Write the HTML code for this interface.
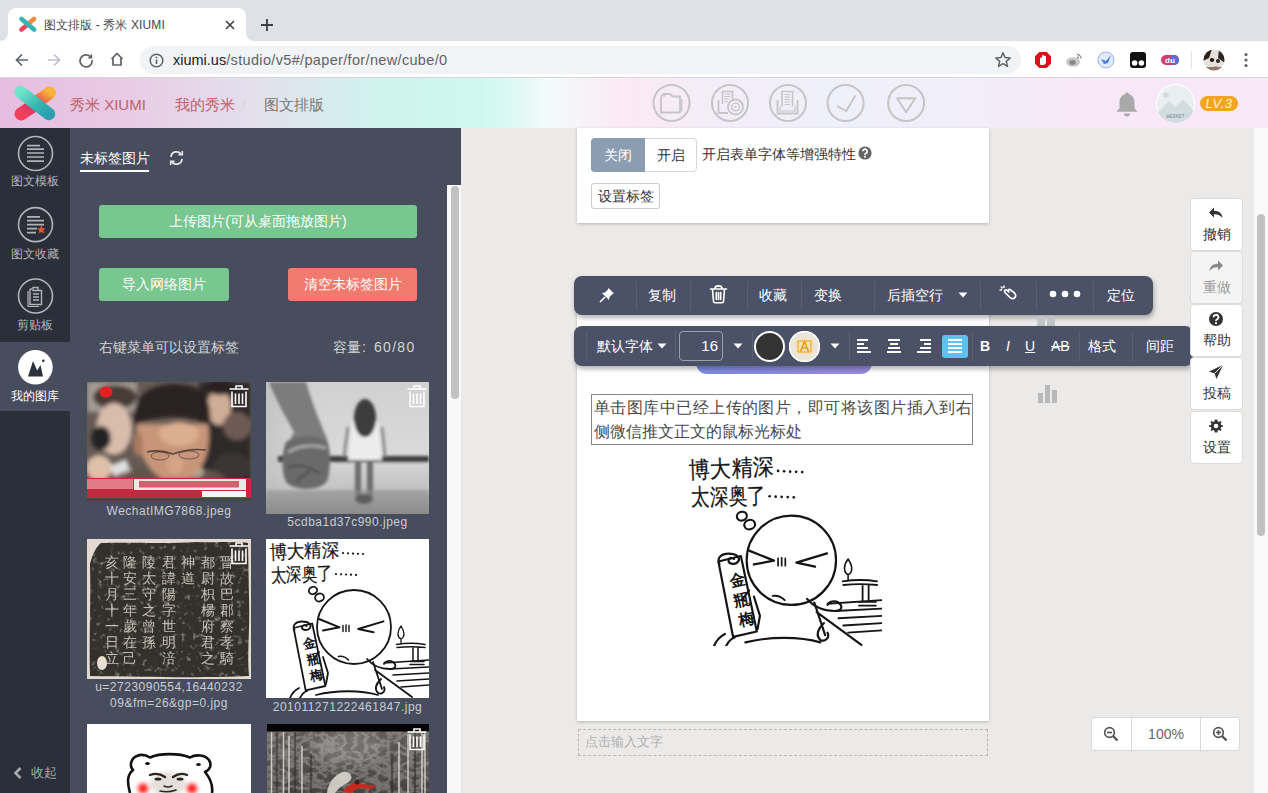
<!DOCTYPE html>
<html><head><meta charset="utf-8">
<style>
*{box-sizing:border-box;margin:0;padding:0}
html,body{width:1268px;height:793px;overflow:hidden;font-family:"Liberation Sans",sans-serif;background:#ebebeb;position:relative}
.a{position:absolute}
/* chrome */
#tabbar{left:0;top:0;width:1268px;height:41px;background:#dee1e6}
#tab{left:8px;top:8px;width:238px;height:34px;background:#fff;border-radius:8px 8px 0 0}
#toolbar{left:0;top:41px;width:1268px;height:37px;background:#fff;border-bottom:1px solid #d6d6d6}
#omni{left:140px;top:46px;width:881px;height:28px;background:#f1f3f4;border-radius:14px}
/* header */
#hdr{left:0;top:78px;width:1268px;height:50px;background:linear-gradient(90deg,#e6bde0 0%,#e9cbe5 10%,#e3e0ec 20%,#cff3ef 30%,#cff7f0 38%,#f2fbfb 43.5%,#fce9f5 49%,#f3edf8 56%,#eff0fa 66%,#f1eef9 76%,#f9e8f7 86%,#f8e9f8 100%)}
#side{left:0;top:128px;width:70px;height:665px;background:#2b2f39}
#panel{left:70px;top:128px;width:391px;height:665px;background:#474d5c}
#canvas{left:461px;top:128px;width:807px;height:665px;background:#ebeae9}
</style></head><body>
<div id="tabbar" class="a"></div>
<div id="tab" class="a"></div><div class="a" style="left:0;top:33px;width:8px;height:8px;background:#fff"></div><div class="a" style="left:0;top:33px;width:8px;height:8px;background:#dee1e6;border-radius:0 0 8px 0"></div><div class="a" style="left:246px;top:33px;width:8px;height:8px;background:#fff"></div><div class="a" style="left:246px;top:33px;width:8px;height:8px;background:#dee1e6;border-radius:0 0 0 8px"></div>
<div id="toolbar" class="a"></div>
<div id="omni" class="a"></div>

<!-- tab content -->
<svg class="a" style="left:18px;top:16px" width="20" height="17" viewBox="0 0 20 17">
 <path d="M16 3 L10 8" stroke="#f08a3c" stroke-width="4.6" stroke-linecap="round"/>
 <path d="M9 9 L3.5 13.5" stroke="#e8455f" stroke-width="4.6" stroke-linecap="round"/>
 <path d="M3.5 3 L16 13.5" stroke="#35b3b5" stroke-width="4.6" stroke-linecap="round"/>
</svg>
<div class="a" style="left:44px;top:17px;font-size:12px;color:#45474a;white-space:nowrap;line-height:17px;letter-spacing:0.1px">图文排版 - 秀米 XIUMI</div>
<svg class="a" style="left:224px;top:19px" width="12" height="12" viewBox="0 0 12 12"><path d="M2 2L10 10M10 2L2 10" stroke="#3c4043" stroke-width="1.6"/></svg>
<svg class="a" style="left:260px;top:18px" width="14" height="14" viewBox="0 0 14 14"><path d="M7 1V13M1 7H13" stroke="#3c4043" stroke-width="1.8"/></svg>
<!-- nav icons -->
<svg class="a" style="left:14px;top:52px" width="16" height="16" viewBox="0 0 16 16"><path d="M14 8H2.5M8 2.5L2.5 8L8 13.5" stroke="#5f6368" stroke-width="1.7" fill="none"/></svg>
<svg class="a" style="left:46px;top:52px" width="16" height="16" viewBox="0 0 16 16"><path d="M2 8H13.5M8 2.5L13.5 8L8 13.5" stroke="#bdc1c6" stroke-width="1.7" fill="none"/></svg>
<svg class="a" style="left:78px;top:52px" width="16" height="16" viewBox="0 0 16 16"><path d="M13 5.5A6 6 0 1 0 14 8" stroke="#5f6368" stroke-width="1.7" fill="none"/><path d="M14.2 1.8V6.5H9.5Z" fill="#5f6368"/></svg>
<svg class="a" style="left:109px;top:51px" width="16" height="16" viewBox="0 0 16 16"><path d="M2.5 8L8 2.5L13.5 8M4 7V14H12V7" stroke="#5f6368" stroke-width="1.7" fill="none" stroke-linejoin="miter"/></svg>
<svg class="a" style="left:149px;top:53px" width="15" height="15" viewBox="0 0 15 15"><circle cx="7.5" cy="7.5" r="6.3" stroke="#5f6368" stroke-width="1.5" fill="none"/><path d="M7.5 6.5V11" stroke="#5f6368" stroke-width="1.6"/><circle cx="7.5" cy="4.4" r="0.9" fill="#5f6368"/></svg>
<div class="a" style="left:173px;top:51px;font-size:14.5px;line-height:18px;color:#5f6368;white-space:nowrap"><span style="color:#202124">xiumi.us</span><span style="letter-spacing:0.34px">/studio/v5#/paper/for/new/cube/0</span></div>
<svg class="a" style="left:994px;top:51px" width="18" height="18" viewBox="0 0 18 18"><path d="M9 1.8L11.1 6.6L16.2 7L12.3 10.4L13.5 15.4L9 12.7L4.5 15.4L5.7 10.4L1.8 7L6.9 6.6Z" stroke="#5f6368" stroke-width="1.5" fill="none" stroke-linejoin="round"/></svg>
<!-- extensions -->
<svg class="a" style="left:1034px;top:51px" width="18" height="18" viewBox="0 0 18 18"><path d="M5.3 1H12.7L17 5.3V12.7L12.7 17H5.3L1 12.7V5.3Z" fill="#d8121c"/><path d="M6 13.5V7.5a1 1 0 0 1 2 0V5a1 1 0 0 1 2 0V5.8a1 1 0 0 1 2 0V11c0 2-1.5 3-3 3H8c-1 0-1.5-.5-2-.5Z" fill="#fff"/></svg>
<svg class="a" style="left:1065px;top:52px" width="18" height="16" viewBox="0 0 18 16"><ellipse cx="8" cy="10" rx="7" ry="4.8" fill="#c9c9c9"/><ellipse cx="7.5" cy="10.5" rx="3.2" ry="2.4" fill="#888"/><path d="M12 2.5a4 4 0 0 1 4 4M12 5a1.6 1.6 0 0 1 1.6 1.6" stroke="#8a8a8a" stroke-width="1.3" fill="none"/></svg>
<svg class="a" style="left:1097px;top:51px" width="18" height="18" viewBox="0 0 18 18"><circle cx="9" cy="9" r="8" fill="#e3ebfb" stroke="#9ab3ee" stroke-width="1"/><path d="M4 8L9 10L14 4L11 12L7 13Z" fill="#4a7de0"/></svg>
<svg class="a" style="left:1129px;top:51px" width="18" height="18" viewBox="0 0 18 18"><rect x="1" y="1" width="16" height="16" rx="3" fill="#111"/><circle cx="5.6" cy="12" r="2.8" fill="#fff"/><circle cx="12.4" cy="12" r="2.8" fill="#fff"/></svg>
<svg class="a" style="left:1160px;top:53px" width="20" height="14" viewBox="0 0 20 14"><rect x="1" y="2" width="18" height="10" rx="5" fill="#d83a6e"/><rect x="10" y="2" width="9" height="10" rx="5" fill="#5b6fd8"/><text x="10" y="10.3" font-size="8" fill="#fff" text-anchor="middle" font-family="Liberation Sans" font-weight="bold">du</text></svg>
<div class="a" style="left:1191px;top:51px;width:1px;height:18px;background:#e3e5e8"></div>
<svg class="a" style="left:1203px;top:49px" width="22" height="22" viewBox="0 0 22 22"><defs><clipPath id="avc"><circle cx="11" cy="11" r="10.5"/></clipPath></defs><g clip-path="url(#avc)"><rect width="22" height="22" fill="#e6e1da"/><path d="M0 0H9L6 9L0 12Z" fill="#2a2320"/><path d="M16 0H22V14L15 9Z" fill="#2f2823"/><ellipse cx="9" cy="11" rx="2.2" ry="2" fill="#1e1a18"/><ellipse cx="15" cy="12" rx="2" ry="2" fill="#2a2220"/><path d="M9 16Q12 19 15 16L13 19Z" fill="#c66"/><path d="M0 18H22V22H0Z" fill="#8a7a6a"/></g></svg>
<svg class="a" style="left:1243px;top:52px" width="6" height="16" viewBox="0 0 6 16"><circle cx="3" cy="2.5" r="1.6" fill="#5f6368"/><circle cx="3" cy="8" r="1.6" fill="#5f6368"/><circle cx="3" cy="13.5" r="1.6" fill="#5f6368"/></svg>
<div id="hdr" class="a"></div>

<!-- app header content -->
<svg class="a" style="left:12px;top:83px" width="46" height="41" viewBox="12 83 46 41">
 <defs>
  <linearGradient id="lg1" x1="0" y1="0" x2="1" y2="1"><stop offset="0" stop-color="#72e6cc"/><stop offset="0.6" stop-color="#33b5ad"/><stop offset="1" stop-color="#2b9fb0"/></linearGradient>
  <linearGradient id="lg2" x1="1" y1="0" x2="0" y2="1"><stop offset="0" stop-color="#f7b23a"/><stop offset="1" stop-color="#e9484f"/></linearGradient>
  <linearGradient id="lg3" x1="1" y1="0" x2="0" y2="1"><stop offset="0" stop-color="#d8386a"/><stop offset="1" stop-color="#f2405a"/></linearGradient>
 </defs>
 <path d="M49.5 93 L37 102" stroke="url(#lg2)" stroke-width="13" stroke-linecap="round" fill="none"/>
 <path d="M33 106 L21 114" stroke="url(#lg3)" stroke-width="13" stroke-linecap="round" fill="none"/>
 <path d="M20.5 92 L49 114" stroke="url(#lg1)" stroke-width="12.5" stroke-linecap="round" fill="none"/>
</svg>
<div class="a" style="left:70px;top:95px;font-size:15px;line-height:20px;color:#c0626a;white-space:nowrap">秀米 XIUMI</div>
<div class="a" style="left:153px;top:95px;font-size:15px;line-height:20px;color:#d8d8d8">/</div>
<div class="a" style="left:175px;top:95px;font-size:15px;line-height:20px;color:#c0626a;white-space:nowrap">我的秀米</div>
<div class="a" style="left:242px;top:95px;font-size:15px;line-height:20px;color:#d8d8d8">/</div>
<div class="a" style="left:264px;top:95px;font-size:15px;line-height:20px;color:#777;white-space:nowrap">图文排版</div>
<svg class="a" style="left:640px;top:80px" width="300" height="46" viewBox="640 80 300 46" fill="none" stroke="#c5c5c7" stroke-width="2">
 <circle cx="671.5" cy="103" r="18"/>
 <path d="M661 96.5V112.5H680V96.5H672.5L670.5 94H663.5L661.5 96.5" stroke-width="1.8" stroke-linejoin="round"/>
 <path d="M664.5 93.8V96.5M681.8 99V111.5" stroke-width="1.4"/>
 <circle cx="730" cy="103" r="18"/>
 <path d="M722.5 104V91.5H732.5V98.5" stroke-width="1.6"/>
 <path d="M724.5 94H730.5M724.5 96.5H730.5M724.5 99H729M724.5 101.5H728" stroke-width="1.2"/>
 <path d="M718.5 100V113H728" stroke-width="1.8"/>
 <circle cx="735.5" cy="107" r="7.5" stroke-width="1.8"/><circle cx="735.5" cy="107" r="3.8" stroke-width="1.3"/><circle cx="735.5" cy="107" r="1" fill="#c5c5c7" stroke="none"/>
 <circle cx="788" cy="103" r="18"/>
 <path d="M782 106.5V91.5H792.5V106.5" stroke-width="1.6"/>
 <path d="M784.5 94.5H790M784.5 97H790M784.5 99.5H790M784.5 102H790M784.5 104.5H790" stroke-width="1.2"/>
 <path d="M777.5 100V113.5H797.5V100" stroke-width="1.8"/>
 <path d="M780 106.5V111H795V106.5" stroke-width="1.2"/>
 <circle cx="845.6" cy="103" r="18"/>
 <path d="M837 106L846.3 111L855.4 95.6" stroke-width="1.9"/>
 <circle cx="906.1" cy="103" r="18"/>
 <path d="M897.2 98.3H915.4L906.1 112.3Z" stroke-width="1.9" stroke-linejoin="round"/>
</svg>
<svg class="a" style="left:1114px;top:90px" width="26" height="28" viewBox="0 0 26 28"><path d="M13 2.5c1.2 0 2 .8 2 1.8 3.6 1 5.5 4 5.5 8v6l3 3.5H2.5l3-3.5v-6c0-4 1.9-7 5.5-8 0-1 .8-1.8 2-1.8Z" fill="#a9a9a9"/><path d="M10 23.5a3 3 0 0 0 6 0Z" fill="#a9a9a9"/></svg>
<div class="a" style="left:1156px;top:84px;width:39px;height:39px;border-radius:50%;background:#fff;overflow:hidden">
 <svg width="39" height="39" viewBox="0 0 39 39"><circle cx="19.5" cy="19.5" r="18.5" fill="#e9eff1"/><circle cx="10" cy="11" r="2.8" fill="#d3dade"/><path d="M2 28L13 17L20 23L27 15L37 26V39H2Z" fill="#d3dce1"/><text x="19.5" y="33.5" font-size="5" fill="#7a8a95" text-anchor="middle" font-family="Liberation Mono">WESKET</text></svg>
</div>
<div class="a" style="left:1200px;top:96px;width:38px;height:15px;border-radius:8px;background:#f3a51f;color:#fff6cc;font-style:italic;font-size:13px;line-height:15px;text-align:center;letter-spacing:0.5px">LV.3</div>
<div id="canvas" class="a"></div>
<div id="side" class="a"></div>

<!-- sidebar content -->
<div class="a" style="left:0;top:342px;width:70px;height:69px;background:#474d5c"></div>
<svg class="a" style="left:0;top:128px" width="70" height="290" viewBox="0 128 70 290" fill="none" stroke="#b3b4b9">
 <circle cx="35.5" cy="153.5" r="17" stroke-width="1.6"/>
 <path d="M27 145.7H40M27 149.2H44M27 153H44M27 157H44M27 161.2H44" stroke-width="1.7"/>
 <circle cx="35.5" cy="224.6" r="17" stroke-width="1.6"/>
 <path d="M27 216.8H40M27 220.6H44M27 224.6H44M27 228.6H37M27 232.6H36" stroke-width="1.7"/>
 <path d="M41.3 225.5L42.6 228.3L45.6 228.6L43.3 230.6L44 233.5L41.3 232L38.6 233.5L39.3 230.6L37 228.6L40 228.3Z" fill="#e0573e" stroke="none"/>
 <circle cx="35.5" cy="296" r="17" stroke-width="1.6"/>
 <path d="M30 289V304.5H41.5V290.5H38.5M32 289H30 M33 287.5H38V290.5H33Z M33 294H39M33 297H39M33 300H39" stroke-width="1.4"/>
 <path d="M28 291V306.5H39" stroke-width="1.2"/>
 <circle cx="35.4" cy="367.2" r="17.3" fill="#fff" stroke="none"/>
 <path d="M28 376.5L33 361L37.2 370.5L40.5 365L43 376.5Z" fill="#2c303a" stroke="none"/>
 <circle cx="43.3" cy="360.8" r="1.3" fill="#2c303a" stroke="none"/>
</svg>
<div class="a" style="left:0;top:173px;width:70px;text-align:center;font-size:12px;line-height:17px;color:#b3b4b9">图文模板</div>
<div class="a" style="left:0;top:245.5px;width:70px;text-align:center;font-size:12px;line-height:17px;color:#b3b4b9">图文收藏</div>
<div class="a" style="left:0;top:317px;width:70px;text-align:center;font-size:12px;line-height:17px;color:#b3b4b9">剪贴板</div>
<div class="a" style="left:0;top:387.5px;width:70px;text-align:center;font-size:12px;line-height:17px;color:#fff">我的图库</div>
<svg class="a" style="left:12px;top:766px" width="12" height="14" viewBox="0 0 12 14"><path d="M8.5 2L3.5 7L8.5 12" stroke="#a7a9ae" stroke-width="2.6" fill="none"/></svg>
<div class="a" style="left:31px;top:764px;font-size:13px;line-height:18px;color:#a7a9ae">收起</div>
<div id="panel" class="a"></div>

<!-- panel content -->
<div class="a" style="left:80px;top:150px;font-size:13.5px;line-height:18px;color:#fff;white-space:nowrap">未标签图片</div>
<div class="a" style="left:80px;top:169.5px;width:69px;height:2px;background:#fff"></div>
<svg class="a" style="left:168px;top:150px" width="17" height="16" viewBox="0 0 17 16" fill="none" stroke="#e6e6e6" stroke-width="1.8"><path d="M3 7A5.5 5.5 0 0 1 13.2 4.5"/><path d="M14 9A5.5 5.5 0 0 1 3.8 11.5"/><path d="M10.5 4.8H14.3V1" stroke-width="1.6"/><path d="M6.5 11.2H2.7V15" stroke-width="1.6"/></svg>
<div class="a" style="left:99px;top:205px;width:318px;height:33px;background:#78c690;border-radius:3px;color:#fff;font-size:14px;line-height:33px;text-align:center">上传图片(可从桌面拖放图片)</div>
<div class="a" style="left:99px;top:268px;width:130px;height:33px;background:#78c690;border-radius:3px;color:#fff;font-size:14px;line-height:33px;text-align:center">导入网络图片</div>
<div class="a" style="left:288px;top:268px;width:129px;height:33px;background:#ef7a6d;border-radius:3px;color:#fff;font-size:14px;line-height:33px;text-align:center">清空未标签图片</div>
<div class="a" style="left:99px;top:338px;font-size:14px;line-height:18px;color:#d2d4d8;white-space:nowrap">右键菜单可以设置标签</div>
<div class="a" style="left:333px;top:338px;font-size:14px;line-height:18px;color:#d2d4d8;white-space:nowrap">容量</div><div class="a" style="left:362px;top:338px;font-size:14px;line-height:18px;color:#d2d4d8">:</div><div class="a" style="left:374px;top:338px;font-size:14px;line-height:18px;color:#d2d4d8;letter-spacing:1.3px;white-space:nowrap">60/80</div>
<!-- scrollbar -->
<div class="a" style="left:447px;top:185px;width:14px;height:608px;background:#f8f8f8"></div>
<div class="a" style="left:451px;top:186px;width:8px;height:213px;background:#c1c1c1;border-radius:4px"></div>

<!-- image 1: news -->
<svg class="a" style="left:87px;top:382px" width="164" height="119" viewBox="0 0 164 119">
 <defs><filter id="b1" x="-10%" y="-10%" width="120%" height="120%"><feGaussianBlur stdDeviation="2"/></filter></defs>
 <rect width="164" height="119" fill="#655a54"/>
 <g filter="url(#b1)">
  <rect x="0" y="0" width="50" height="30" fill="#a49c94"/>
  <rect x="112" y="0" width="52" height="119" fill="#2f2a29"/>
  <ellipse cx="28" cy="15" rx="22" ry="12" fill="#4a3a34"/>
  <ellipse cx="27" cy="47" rx="18" ry="26" fill="#d8bcac"/>
  <ellipse cx="14" cy="56" rx="10" ry="12" fill="#232020"/>
  <ellipse cx="12" cy="86" rx="13" ry="13" fill="#dcc0a8"/>
  <ellipse cx="132" cy="25" rx="12" ry="18" fill="#cfae98"/>
  <ellipse cx="134" cy="5" rx="16" ry="8" fill="#2a2423"/>
  <ellipse cx="150" cy="44" rx="14" ry="14" fill="#6e5a54"/>
  <ellipse cx="145" cy="85" rx="18" ry="14" fill="#3a3534"/>
  <path d="M36 98 C45 80 60 86 88 90 C110 92 125 80 140 98Z" fill="#5f574c"/>
  <ellipse cx="107" cy="90" rx="10" ry="6" fill="#b0a890"/>
  <path d="M50 42 C48 62 56 86 76 97 L102 97 C120 86 124 62 121 42 Z" fill="#c7957a"/>
  <ellipse cx="92" cy="52" rx="20" ry="12" fill="#dcae90"/>
  <ellipse cx="88" cy="82" rx="8" ry="10" fill="#d6a486"/>
  <ellipse cx="51" cy="62" rx="5" ry="12" fill="#a87a62"/>
  <path d="M47 44 C44 14 62 2 88 2 C116 2 126 16 123 44 C110 34 70 31 47 44Z" fill="#2a2220"/>
  <rect x="24" y="80" width="18" height="12" fill="#e0e0e0" transform="rotate(-22 33 86)"/>
 </g>
 <path d="M60 70 Q72 67 86 72 Q102 66 119 68" stroke="#2a2220" stroke-width="1.5" fill="none" opacity="0.7"/><ellipse cx="73" cy="74" rx="9" ry="4" fill="none" stroke="#3a302a" stroke-width="1" opacity="0.6"/><ellipse cx="102" cy="73" rx="10" ry="4" fill="none" stroke="#3a302a" stroke-width="1" opacity="0.6"/>
 <rect x="0" y="96" width="164" height="20" fill="#c32a40"/>
 <rect x="0" y="97" width="46" height="10" fill="#e27a88"/>
 <rect x="47" y="97" width="112" height="11" fill="#efe6e6"/>
 <rect x="52" y="99" width="100" height="6.5" fill="#c8404e" opacity="0.8"/>
 <rect x="115" y="109" width="44" height="6" fill="#f4f4f4"/>
 <rect x="0" y="116" width="164" height="3" fill="#4a4444"/>
 <ellipse cx="19" cy="10" rx="6.5" ry="5.5" fill="#e52020"/>
</svg>
<svg class="a" style="left:228px;top:384px" width="22" height="24" viewBox="0 0 22 24" fill="none" stroke="#fff" stroke-width="1.6"><path d="M1.5 5H20.5M8 5V2H14V5M4 7.5V22.5H18V7.5M7.5 9.5V20M11 9.5V20M14.5 9.5V20"/></svg>
<div class="a" style="left:87px;top:504px;width:164px;text-align:center;font-size:12px;line-height:15px;color:#c9ccd3;letter-spacing:0.5px;white-space:nowrap">WechatIMG7868.jpeg</div>
<!-- image 2: bw -->
<svg class="a" style="left:266px;top:382px" width="163" height="132" viewBox="0 0 163 132">
 <defs><filter id="b2" x="-10%" y="-10%" width="120%" height="120%"><feGaussianBlur stdDeviation="1.5"/></filter>
 <linearGradient id="g2" x1="0" y1="0" x2="0" y2="1"><stop offset="0" stop-color="#d0d0d0"/><stop offset="0.55" stop-color="#dadada"/><stop offset="0.8" stop-color="#c2c2c2"/><stop offset="1" stop-color="#888"/></linearGradient>
 <linearGradient id="g2b" x1="0" y1="0" x2="1" y2="0"><stop offset="0" stop-color="#bdbdbd"/><stop offset="0.5" stop-color="#dcdcdc" stop-opacity="0"/></linearGradient></defs>
 <rect width="163" height="132" fill="url(#g2)"/>
 <rect width="163" height="110" fill="url(#g2b)" opacity="0.7"/>
 <g filter="url(#b2)">
  <rect x="12" y="74" width="151" height="6" fill="#3c3c3c"/>
  <path d="M86 40 L112 40 L116 78 L82 78Z" fill="#ececec"/>
  <path d="M82 45 L78 75 M116 45 L119 75" stroke="#8a8a8a" stroke-width="3"/>
  <ellipse cx="99" cy="36" rx="11" ry="19" fill="#3e3e3e"/>
  <rect x="89" y="78" width="6" height="36" fill="#6a6a6a"/>
  <rect x="101" y="78" width="6" height="36" fill="#6a6a6a"/>
  <ellipse cx="98" cy="117" rx="9" ry="5" fill="#222"/>
  <rect x="0" y="108" width="163" height="24" fill="#8e8e8e" opacity="0.55"/>
  <path d="M3 0 L40 0 C45 18 52 35 58 50 C64 60 66 80 62 98 C56 108 34 110 22 102 C15 94 15 72 24 58 L28 50 C18 32 9 16 3 0Z" fill="#7c7c7c"/><path d="M20 60 C30 52 55 52 62 62 C66 80 62 98 58 102 C50 108 32 108 22 102 C15 94 15 72 20 60Z" fill="#6a6a6a"/>
  <path d="M22 70 Q40 60 60 66" stroke="#a8a8a8" stroke-width="3" fill="none"/>
  <path d="M22 85 Q38 80 54 92 M30 100 L44 88" stroke="#4a4a4a" stroke-width="2" fill="none"/>
 </g>
</svg>
<svg class="a" style="left:406px;top:384px" width="22" height="24" viewBox="0 0 22 24" fill="none" stroke="#fff" stroke-width="1.6"><path d="M1.5 5H20.5M8 5V2H14V5M4 7.5V22.5H18V7.5M7.5 9.5V20M11 9.5V20M14.5 9.5V20"/></svg>
<div class="a" style="left:266px;top:515px;width:163px;text-align:center;font-size:12px;line-height:15px;color:#c9ccd3;letter-spacing:0.5px;white-space:nowrap">5cdba1d37c990.jpeg</div>

<!-- image 3: stele -->
<svg class="a" style="left:87px;top:539px" width="164" height="140" viewBox="0 0 164 140">
 <defs><filter id="b3"><feGaussianBlur stdDeviation="0.55"/></filter>
 <filter id="n3" x="0" y="0" width="100%" height="100%"><feTurbulence type="fractalNoise" baseFrequency="0.18" numOctaves="3" seed="7"/><feColorMatrix values="0 0 0 0 0.8  0 0 0 0 0.78  0 0 0 0 0.74  0 0 0 -3 1.25"/></filter></defs>
 <rect width="164" height="140" fill="#e2dad0"/>
 <path d="M14 4 C40 3 80 5 110 3 C130 4 150 2 161 4 L162 60 C163 90 160 115 162 137 C120 139 60 138 3 137 C2 100 4 60 3 25 C6 14 9 8 14 4Z" fill="#34302c"/>
 <rect width="164" height="140" filter="url(#n3)" opacity="0.55"/>
 <g filter="url(#b3)" fill="#dcd6cc" font-family="Liberation Serif" font-size="14" opacity="0.85"><text x="140" y="28" text-anchor="middle">晋</text><text x="140" y="44" text-anchor="middle">故</text><text x="140" y="60" text-anchor="middle">巴</text><text x="140" y="76" text-anchor="middle">郡</text><text x="140" y="92" text-anchor="middle">察</text><text x="140" y="108" text-anchor="middle">孝</text><text x="140" y="124" text-anchor="middle">騎</text><text x="121" y="28" text-anchor="middle">都</text><text x="121" y="44" text-anchor="middle">尉</text><text x="121" y="60" text-anchor="middle">枳</text><text x="121" y="76" text-anchor="middle">楊</text><text x="121" y="92" text-anchor="middle">府</text><text x="121" y="108" text-anchor="middle">君</text><text x="121" y="124" text-anchor="middle">之</text><text x="101" y="28" text-anchor="middle">神</text><text x="101" y="44" text-anchor="middle">道</text><text x="82" y="28" text-anchor="middle">君</text><text x="82" y="44" text-anchor="middle">諱</text><text x="82" y="60" text-anchor="middle">陽</text><text x="82" y="76" text-anchor="middle">字</text><text x="82" y="92" text-anchor="middle">世</text><text x="82" y="108" text-anchor="middle">明</text><text x="82" y="124" text-anchor="middle">涪</text><text x="62" y="28" text-anchor="middle">陵</text><text x="62" y="44" text-anchor="middle">太</text><text x="62" y="60" text-anchor="middle">守</text><text x="62" y="76" text-anchor="middle">之</text><text x="62" y="92" text-anchor="middle">曾</text><text x="62" y="108" text-anchor="middle">孫</text><text x="43" y="28" text-anchor="middle">隆</text><text x="43" y="44" text-anchor="middle">安</text><text x="43" y="60" text-anchor="middle">三</text><text x="43" y="76" text-anchor="middle">年</text><text x="43" y="92" text-anchor="middle">歲</text><text x="43" y="108" text-anchor="middle">在</text><text x="43" y="124" text-anchor="middle">己</text><text x="24.5" y="28" text-anchor="middle">亥</text><text x="24.5" y="44" text-anchor="middle">十</text><text x="24.5" y="60" text-anchor="middle">月</text><text x="24.5" y="76" text-anchor="middle">十</text><text x="24.5" y="92" text-anchor="middle">一</text><text x="24.5" y="108" text-anchor="middle">日</text><text x="24.5" y="124" text-anchor="middle">立</text></g>
 <ellipse cx="15" cy="124" rx="5" ry="7" fill="#e8e0d5"/>
</svg>
<svg class="a" style="left:228px;top:541px" width="22" height="24" viewBox="0 0 22 24" fill="none" stroke="#fff" stroke-width="1.6"><path d="M1.5 5H20.5M8 5V2H14V5M4 7.5V22.5H18V7.5M7.5 9.5V20M11 9.5V20M14.5 9.5V20"/></svg>
<div class="a" style="left:87px;top:679px;width:164px;text-align:center;font-size:12px;line-height:16px;color:#c9ccd3;letter-spacing:0.5px;white-space:nowrap">u=2723090554,16440232<br>09&amp;fm=26&amp;gp=0.jpg</div>
<!-- image 4: comic small -->
<svg class="a" style="left:0;top:0" width="0" height="0"><defs><symbol id="comic" viewBox="0 0 163 159">
 <rect width="163" height="159" fill="#fff"/>
 <g font-family="Liberation Sans" fill="#151515" stroke="#151515" stroke-width="0.2">
  <text x="3.5" y="19.5" font-size="19" textLength="70" lengthAdjust="spacingAndGlyphs" transform="rotate(-2 3.5 19.5)">博大精深</text>
  <text x="5" y="42.5" font-size="19" textLength="62" lengthAdjust="spacingAndGlyphs" transform="rotate(-1.5 5 42.5)">太深奥了</text>
 </g>
 <g fill="#151515"><circle cx="77" cy="14" r="1.1"/><circle cx="82" cy="14.3" r="1.1"/><circle cx="87" cy="14.6" r="1.1"/><circle cx="92" cy="14.8" r="1.1"/><circle cx="97" cy="15" r="1.1"/>
 <circle cx="70" cy="35" r="1.1"/><circle cx="75" cy="35.3" r="1.1"/><circle cx="80" cy="35.5" r="1.1"/><circle cx="85" cy="35.7" r="1.1"/><circle cx="90" cy="35.9" r="1.1"/></g>
 <g fill="none" stroke="#151515" stroke-width="1.8" stroke-linecap="round" stroke-linejoin="round">
  <ellipse cx="47" cy="51.5" rx="4.2" ry="3.6" transform="rotate(-20 47 51.5)"/><ellipse cx="53.5" cy="58.5" rx="4.5" ry="3.9" transform="rotate(-20 53.5 58.5)"/>
  <circle cx="88" cy="88" r="37"/>
  <path d="M53 80 L73.6 88.3 L57 91.5 M117.5 82.3 L92.2 90 L107.6 93.3" stroke-width="1.9"/>
  <path d="M77 86.5 V92.5 M80 86 V92.5 M83 86.5 V92.5" stroke-width="1.4"/>
  <path d="M72.5 117.5 Q78 116.5 82.5 121" stroke-width="1.6"/>
  <path d="M27.6 89 L46.2 84.5 L59.4 147 L39.7 151.4 Z"/>
  <path d="M28.5 91 C26 86 30 82.5 36 82.5 C43 82.5 46 86 44 89 C42 92 36 91.5 36 88.5 C36 86 39 85.5 40.5 87"/>
  <path d="M53 113 L47 121 M57 118 L62 134 L60 145"/>
  <path d="M101 120 C106 126 114 130 124 130 C130 130 131 126 127 123 C124 121 119 122 118 125"/>
  <path d="M107 123 L116 150 M109 131 L146 158"/>
  <path d="M115 140 C110 145 108 150 112 154 C116 156 120 152 118 148"/>
  <path d="M135 87 C131 92 131 98 135 100 C139 98 139 93 135 87 Z M135 100 V104" stroke-width="1.3"/>
  <path d="M130.5 105.5 C140 104 150 104 159 105.5 M131 108.5 C140 107.5 150 107.5 159 108.5 M147 109 V122 M152 109 V122 M144 122.5 H158 M144 125.5 H158" stroke-width="1.5"/>
  <path d="M118 124 L163 121 M124 130 L163 128 M127 136 L163 134 M131 142 L163 140 M135 148 L163 146" stroke-width="1.5"/>
  <path d="M50 156 C70 151 95 151 112 156 M24 159 C26 154 29 151 33 149 M34 159 C36 155 38 153 41 152"/>
 </g>
 <g font-family="Liberation Sans" font-weight="bold" font-size="13" fill="#151515" text-anchor="middle">
  <text x="43" y="109" transform="rotate(-13 43 104)">金</text><text x="47" y="125" transform="rotate(-13 47 120)">瓶</text><text x="50.5" y="141" transform="rotate(-13 50.5 136)">梅</text>
 </g>
</symbol></defs></svg>
<svg class="a" style="left:266px;top:539px" width="163" height="159"><use href="#comic"/></svg>
<div class="a" style="left:266px;top:700px;width:163px;text-align:center;font-size:12px;line-height:15px;color:#c9ccd3;letter-spacing:0.5px;white-space:nowrap">201011271222461847.jpg</div>
<!-- image 5: bear -->
<svg class="a" style="left:87px;top:724px" width="164" height="69" viewBox="0 0 164 69">
 <defs><filter id="b5" x="-100%" y="-100%" width="300%" height="300%"><feGaussianBlur stdDeviation="2"/></filter><filter id="b5b"><feGaussianBlur stdDeviation="0.5"/></filter></defs>
 <rect width="164" height="69" fill="#fff"/>
 <path d="M43 69 C40 58 40 51 46 46 C42 42 44 34 50 32 C54 30 59 31 63 33.5 C73 29 92 29 103 33.5 C109 30 118 31 122 36 C125 41 123 46 118 48 C123 54 126 62 125 69" fill="#fff" stroke="#111" stroke-width="2.6" stroke-linejoin="round"/>
 <ellipse cx="60.5" cy="39.5" rx="2.4" ry="1.6" fill="#111"/><ellipse cx="111.5" cy="40.5" rx="2.4" ry="1.6" fill="#111"/>
 <ellipse cx="81" cy="60" rx="18" ry="12" fill="#cfc6bd" opacity="0.55" filter="url(#b5)"/>
 <g filter="url(#b5b)" stroke="#2a2522" fill="none" stroke-linecap="round">
  <path d="M63 51 Q71 48 78 53" stroke-width="2.4"/><path d="M86 53 Q93 48 100 51" stroke-width="2.4"/>
  <ellipse cx="71" cy="55" rx="3.5" ry="1.6" fill="#2a2522" stroke="none"/><ellipse cx="93" cy="55" rx="3.5" ry="1.6" fill="#2a2522" stroke="none"/>
  <path d="M77 62 Q81 64 85 62" stroke-width="1.5"/><path d="M73 67 Q81 69 89 66" stroke-width="1.6"/>
 </g>
 <circle cx="56" cy="64.5" r="5" fill="#ff1a1a" filter="url(#b5)"/><circle cx="105" cy="64.5" r="5" fill="#ff1a1a" filter="url(#b5)"/>
</svg>
<!-- image 6: forest -->
<svg class="a" style="left:267px;top:724px" width="162" height="69" viewBox="0 0 162 69">
 <defs><filter id="b6"><feGaussianBlur stdDeviation="0.5"/></filter>
 <filter id="b6b" x="-50%" y="-50%" width="200%" height="200%"><feGaussianBlur stdDeviation="4"/></filter>
 <filter id="n6" x="0" y="0" width="100%" height="100%"><feTurbulence type="turbulence" baseFrequency="0.09 0.14" numOctaves="3" seed="4"/><feColorMatrix values="0 0 0 0 0.8  0 0 0 0 0.78  0 0 0 0 0.76  0 0 0 -3.5 1.6"/></filter>
 <linearGradient id="lg6" x1="0" y1="0" x2="0" y2="1"><stop offset="0" stop-color="#625e5b"/><stop offset="0.6" stop-color="#524e4b"/><stop offset="1" stop-color="#464240"/></linearGradient></defs>
 <rect width="162" height="69" fill="url(#lg6)"/>
 <ellipse cx="82" cy="24" rx="36" ry="16" fill="#8d8a87" opacity="0.5" filter="url(#b6b)"/>
 <rect y="7" width="162" height="62" filter="url(#n6)" opacity="0.28"/>
 <g stroke="#2f2c2b" stroke-width="2.2" opacity="0.55"><path d="M10 8V69M28 8V69M44 30V69M125 30V69M148 8V69"/></g>
 <g filter="url(#b6)" stroke="#d6d2cc" stroke-width="1.5" opacity="0.9">
  <path d="M4.5 8V69M16.5 8V69M22 12V69M35 22V69M132 18V69M141 10V69M155 8V69M158 8V69"/>
 </g>
 <path d="M60 69 C61 60 66 53 72 50 C76 47 80 47 83 50 C86 54 84 57 80 59 C74 62 70 66 68 69Z" fill="#d8d4cc" opacity="0.9"/>
 <path d="M76 68 C80 60 88 58 96 60 L110 62 L104 65 L92 64 C88 66 85 68 84 69Z" fill="#c82a20"/>
 <circle cx="90" cy="58" r="2.5" fill="#3a2020"/>
 <rect width="162" height="7.5" fill="#050505"/>
</svg>
<svg class="a" style="left:406px;top:727px" width="22" height="24" viewBox="0 0 22 24" fill="none" stroke="#fff" stroke-width="1.6"><path d="M1.5 5H20.5M8 5V2H14V5M4 7.5V22.5H18V7.5M7.5 9.5V20M11 9.5V20M14.5 9.5V20"/></svg>

<!-- main canvas -->
<div class="a" style="left:577px;top:128px;width:412px;height:95px;background:#fff;box-shadow:0 1px 3px rgba(0,0,0,0.22)"></div>
<div class="a" style="left:591px;top:138px;width:106px;height:34px;border:1px solid #d6d6d6;border-radius:4px;background:#fff"></div>
<div class="a" style="left:591px;top:138px;width:54px;height:34px;background:#8d9db1;border-radius:4px 0 0 4px;color:#fff;font-size:14px;line-height:34px;text-align:center">关闭</div>
<div class="a" style="left:645px;top:138px;width:52px;height:34px;color:#333;font-size:14px;line-height:34px;text-align:center">开启</div>
<div class="a" style="left:702px;top:145px;font-size:14px;line-height:18px;color:#333;white-space:nowrap">开启表单字体等增强特性</div>
<svg class="a" style="left:858px;top:146px" width="14" height="14" viewBox="0 0 14 14"><circle cx="7" cy="7" r="6.6" fill="#666"/><path d="M4.8 5.3a2.2 2.2 0 1 1 3.2 2c-.8.4-1 .8-1 1.6" stroke="#fff" stroke-width="1.7" fill="none"/><circle cx="7" cy="10.8" r="1" fill="#fff"/></svg>
<div class="a" style="left:591px;top:183px;width:69px;height:26px;border:1px solid #ccc;border-radius:3px;background:#fff;color:#333;font-size:14px;line-height:24px;text-align:center">设置标签</div>
<!-- paper 2 -->
<div class="a" style="left:577px;top:300px;width:412px;height:421px;background:#fff;box-shadow:0 1px 3px rgba(0,0,0,0.22)"></div>
<div class="a" style="left:696px;top:352px;width:176px;height:22px;border-radius:11px;background:linear-gradient(90deg,#7f8be4,#9a8be0)"></div>
<div class="a" style="left:591px;top:394px;width:382px;height:51px;border:1px solid #888"></div>
<div class="a" style="left:594px;top:396px;font-size:16px;line-height:24px;color:#4a4a4a;letter-spacing:0.45px;white-space:nowrap">单击图库中已经上传的图片，即可将该图片插入到右</div><div class="a" style="left:594px;top:420px;font-size:16px;line-height:24px;color:#4a4a4a;white-space:nowrap">侧微信推文正文的鼠标光标处</div>
<svg class="a" style="left:685px;top:454px" width="197" height="192" viewBox="0 0 163 159"><use href="#comic"/></svg>
<div class="a" style="left:578px;top:729px;width:410px;height:27px;border:1px dashed #b8b8b8"></div>
<div class="a" style="left:585px;top:734px;font-size:12.5px;line-height:17px;color:#b0b0b0">点击输入文字</div>

<!-- toolbar 1 -->
<div class="a" style="left:574px;top:276px;width:579px;height:39px;background:#4b5267;border-radius:8px;box-shadow:1px 3px 5px rgba(0,0,0,0.3)"></div>
<div class="a" style="left:636px;top:281px;width:1px;height:29px;background:#586074"></div><div class="a" style="left:690px;top:281px;width:1px;height:29px;background:#586074"></div><div class="a" style="left:747px;top:281px;width:1px;height:29px;background:#586074"></div><div class="a" style="left:801px;top:281px;width:1px;height:29px;background:#586074"></div><div class="a" style="left:874px;top:281px;width:1px;height:29px;background:#586074"></div><div class="a" style="left:980px;top:281px;width:1px;height:29px;background:#586074"></div><div class="a" style="left:1036px;top:281px;width:1px;height:29px;background:#586074"></div><div class="a" style="left:1093px;top:281px;width:1px;height:29px;background:#586074"></div>
<svg class="a" style="left:598px;top:286px" width="18" height="18" viewBox="0 0 18 18"><path d="M10.5 2L16 7.5L14.5 8L11.5 11L11 14L4 7L7 6.5L10 3.5Z" fill="#fff"/><path d="M7 11L2 16" stroke="#fff" stroke-width="1.6"/></svg>
<div class="a" style="left:648px;top:286px;font-size:14px;line-height:18px;color:#fff">复制</div>
<svg class="a" style="left:709px;top:284px" width="19" height="20" viewBox="0 0 19 20" fill="none" stroke="#fff" stroke-width="1.6" stroke-linecap="round"><path d="M1.5 5H17.5M6 4.5C6 1 13 1 13 4.5M3.5 5.5L4.5 17.5Q4.7 18.8 6 18.8H13Q14.3 18.8 14.5 17.5L15.5 5.5M7.3 8.5V15.5M9.5 8.5V15.5M11.7 8.5V15.5"/></svg>
<div class="a" style="left:759px;top:286px;font-size:14px;line-height:18px;color:#fff">收藏</div>
<div class="a" style="left:814px;top:286px;font-size:14px;line-height:18px;color:#fff">变换</div>
<div class="a" style="left:887px;top:286px;font-size:14px;line-height:18px;color:#fff">后插空行</div>
<svg class="a" style="left:958px;top:292px" width="10" height="6" viewBox="0 0 10 6"><path d="M0.5 0.5H9.5L5 5.5Z" fill="#fff"/></svg>
<svg class="a" style="left:997px;top:284px" width="22" height="22" viewBox="0 0 22 22" fill="none" stroke="#fff" stroke-width="1.7"><path d="M8 8.5L13 13.5C14.5 15 16.5 15 17.8 13.7C19 12.5 19 10.5 17.5 9L13.5 5.8C12.8 5.2 12 5.3 11.6 6L11 7M8 8.5C7.3 7.8 7.3 6.8 8 6.2C8.6 5.6 9.6 5.6 10.2 6.3L12.5 8.5"/><path d="M4 2.5L5.5 4.5M2.5 6H5M7 1.5V4" stroke-width="1.5"/></svg>
<svg class="a" style="left:1049px;top:290px" width="32" height="8" viewBox="0 0 32 8"><circle cx="4" cy="4" r="3.3" fill="#fff"/><circle cx="16" cy="4" r="3.3" fill="#fff"/><circle cx="28" cy="4" r="3.3" fill="#fff"/></svg>
<div class="a" style="left:1107px;top:286px;font-size:14px;line-height:18px;color:#fff">定位</div>
<!-- hidden icons behind -->
<div class="a" style="left:1037px;top:316px;width:8px;height:10px;background:#c4c4c4"></div>
<div class="a" style="left:1047px;top:316px;width:8px;height:10px;background:#c4c4c4"></div>
<svg class="a" style="left:1037px;top:382px" width="21" height="21" viewBox="0 0 21 21"><rect x="1" y="11" width="5" height="10" fill="#b9b9b9"/><rect x="8" y="3" width="5" height="18" fill="#b9b9b9"/><rect x="15" y="8" width="5" height="13" fill="#b9b9b9"/></svg>
<!-- toolbar 2 -->
<div class="a" style="left:574px;top:326px;width:619px;height:40px;background:#4b5267;border-radius:8px;box-shadow:1px 3px 5px rgba(0,0,0,0.3)"></div>
<div class="a" style="left:586px;top:331px;width:1px;height:30px;background:#586074"></div><div class="a" style="left:675px;top:331px;width:1px;height:30px;background:#586074"></div><div class="a" style="left:752px;top:331px;width:1px;height:30px;background:#586074"></div><div class="a" style="left:849px;top:331px;width:1px;height:30px;background:#586074"></div><div class="a" style="left:972px;top:331px;width:1px;height:30px;background:#586074"></div><div class="a" style="left:1079px;top:331px;width:1px;height:30px;background:#586074"></div><div class="a" style="left:1132px;top:331px;width:1px;height:30px;background:#586074"></div>
<div class="a" style="left:597px;top:337px;font-size:14px;line-height:18px;color:#fff">默认字体</div>
<svg class="a" style="left:657px;top:343px" width="10" height="6" viewBox="0 0 10 6"><path d="M0.5 0.5H9.5L5 5.5Z" fill="#fff"/></svg>
<div class="a" style="left:679px;top:331px;width:44px;height:30px;border:1px solid #9aa0b0;border-radius:4px;color:#fff;font-size:15px;line-height:28px;text-align:right;padding-right:4px">16</div>
<svg class="a" style="left:733px;top:343px" width="10" height="6" viewBox="0 0 10 6"><path d="M0.5 0.5H9.5L5 5.5Z" fill="#fff"/></svg>
<div class="a" style="left:754px;top:331px;width:31px;height:31px;border-radius:50%;background:#333;border:2px solid #fff"></div>
<svg class="a" style="left:789px;top:331px" width="31" height="31" viewBox="0 0 31 31"><circle cx="15.5" cy="15.5" r="15" fill="#ebe6dc"/><circle cx="15.5" cy="15.5" r="15" fill="none" stroke="#fff" stroke-width="1.5"/><path d="M7 8H24V23H7Z" fill="#f7e0a8" opacity="0.8"/><path d="M9 10H22V21H9Z" fill="none" stroke="#e9a020" stroke-width="1"/><path d="M11.5 20.5L15.5 10.5L19.5 20.5M13 17H18" stroke="#e39a1a" stroke-width="1.5" fill="none"/></svg>
<svg class="a" style="left:830px;top:343px" width="10" height="6" viewBox="0 0 10 6"><path d="M0.5 0.5H9.5L5 5.5Z" fill="#fff"/></svg>
<svg class="a" style="left:856px;top:338px" width="16" height="16" viewBox="0 0 16 16" fill="#fff"><rect x="1" y="1" width="11" height="2"/><rect x="1" y="5" width="7" height="2"/><rect x="1" y="9" width="11" height="2"/><rect x="1" y="13" width="14" height="2"/></svg>
<svg class="a" style="left:886px;top:338px" width="16" height="16" viewBox="0 0 16 16" fill="#fff"><rect x="2" y="1" width="12" height="2"/><rect x="4" y="5" width="8" height="2"/><rect x="2" y="9" width="12" height="2"/><rect x="1" y="13" width="14" height="2"/></svg>
<svg class="a" style="left:916px;top:338px" width="16" height="16" viewBox="0 0 16 16" fill="#fff"><rect x="4" y="1" width="11" height="2"/><rect x="8" y="5" width="7" height="2"/><rect x="4" y="9" width="11" height="2"/><rect x="1" y="13" width="14" height="2"/></svg>
<div class="a" style="left:942px;top:335px;width:26px;height:23px;border-radius:3px;background:#5bc2f2"></div>
<svg class="a" style="left:947px;top:338px" width="16" height="16" viewBox="0 0 16 16" fill="#fff"><rect x="1" y="1" width="14" height="2"/><rect x="1" y="5" width="14" height="2"/><rect x="1" y="9" width="14" height="2"/><rect x="1" y="13" width="14" height="2"/></svg>
<div class="a" style="left:980px;top:337px;font-size:14px;line-height:18px;color:#fff;font-weight:bold">B</div>
<div class="a" style="left:1006px;top:337px;font-size:14px;line-height:18px;color:#fff;font-style:italic">I</div>
<div class="a" style="left:1025px;top:337px;font-size:14px;line-height:18px;color:#fff;text-decoration:underline">U</div>
<div class="a" style="left:1051px;top:337px;font-size:14px;line-height:18px;color:#fff;text-decoration:line-through">AB</div>
<div class="a" style="left:1088px;top:337px;font-size:14px;line-height:18px;color:#fff">格式</div>
<div class="a" style="left:1146px;top:337px;font-size:14px;line-height:18px;color:#fff">间距</div>
<div class="a" style="left:1190px;top:198px;width:53px;height:53px;background:#fff;border:1px solid #dcdcdc;border-radius:4px"></div><svg class="a" style="left:1208px;top:205px" width="16" height="16" viewBox="0 0 16 16"><path d="M6 2.5L1 7.5L6 12.5V9.2C10 9 12.5 10.2 14.5 13C14 8.5 11.5 6 6 5.8Z" fill="#333"/></svg><div class="a" style="left:1190px;top:225px;width:53px;text-align:center;font-size:14px;line-height:18px;color:#333">撤销</div><div class="a" style="left:1190px;top:251px;width:53px;height:53px;background:#f4f4f4;border:1px solid #dcdcdc;border-radius:4px"></div><svg class="a" style="left:1208px;top:258px" width="16" height="16" viewBox="0 0 16 16"><path d="M10 2.5L15 7.5L10 12.5V9.2C6 9 3.5 10.2 1.5 13C2 8.5 4.5 6 10 5.8Z" fill="#888"/></svg><div class="a" style="left:1190px;top:278px;width:53px;text-align:center;font-size:14px;line-height:18px;color:#999">重做</div><div class="a" style="left:1190px;top:304px;width:53px;height:53px;background:#fff;border:1px solid #dcdcdc;border-radius:4px"></div><svg class="a" style="left:1208px;top:311px" width="16" height="16" viewBox="0 0 16 16"><circle cx="8" cy="8" r="7" fill="#333"/><path d="M5.6 6.2a2.4 2.4 0 1 1 3.5 2.1c-.8.4-1.1.8-1.1 1.6" stroke="#fff" stroke-width="1.8" fill="none"/><circle cx="8" cy="12.2" r="1.1" fill="#fff"/></svg><div class="a" style="left:1190px;top:331px;width:53px;text-align:center;font-size:14px;line-height:18px;color:#333">帮助</div><div class="a" style="left:1190px;top:357px;width:53px;height:53px;background:#fff;border:1px solid #dcdcdc;border-radius:4px"></div><svg class="a" style="left:1208px;top:364px" width="16" height="16" viewBox="0 0 16 16"><path d="M15 1L1 7.5L6.5 9.5L8.5 15Z" fill="#333"/><path d="M6.5 9.5L15 1" stroke="#fff" stroke-width="1"/></svg><div class="a" style="left:1190px;top:384px;width:53px;text-align:center;font-size:14px;line-height:18px;color:#333">投稿</div><div class="a" style="left:1190px;top:411px;width:53px;height:53px;background:#fff;border:1px solid #dcdcdc;border-radius:4px"></div><svg class="a" style="left:1208px;top:418px" width="16" height="16" viewBox="0 0 16 16"><path d="M8 1.5L9.3 1.7L9.7 3.5L11 4.1L12.6 3.1L13.6 4.1L12.6 5.7L13.1 7L15 7.4V8.7L13.1 9.1L12.6 10.4L13.6 12L12.6 13L11 12L9.7 12.6L9.3 14.4H6.8L6.4 12.6L5.1 12L3.5 13L2.5 12L3.5 10.4L3 9.1L1 8.7V7.4L3 7L3.5 5.7L2.5 4.1L3.5 3.1L5.1 4.1L6.4 3.5L6.8 1.7Z" fill="#333"/><circle cx="8" cy="8" r="2.3" fill="#fff"/></svg><div class="a" style="left:1190px;top:438px;width:53px;text-align:center;font-size:14px;line-height:18px;color:#333">设置</div>
<div class="a" style="left:1091px;top:717px;width:149px;height:34px;background:#fff;border:1px solid #d8d8d8;border-radius:3px"></div>
<div class="a" style="left:1131px;top:718px;width:1px;height:32px;background:#d8d8d8"></div>
<div class="a" style="left:1200px;top:718px;width:1px;height:32px;background:#d8d8d8"></div>
<svg class="a" style="left:1103px;top:726px" width="16" height="16" viewBox="0 0 16 16" fill="none" stroke="#555" stroke-width="1.7"><circle cx="6.5" cy="6.5" r="4.8"/><path d="M10 10L14.5 14.5" stroke-width="2.4"/><path d="M4 6.5H9"/></svg>
<div class="a" style="left:1132px;top:725px;width:68px;text-align:center;font-size:14px;line-height:18px;color:#666">100%</div>
<svg class="a" style="left:1212px;top:726px" width="16" height="16" viewBox="0 0 16 16" fill="none" stroke="#555" stroke-width="1.7"><circle cx="6.5" cy="6.5" r="4.8"/><path d="M10 10L14.5 14.5" stroke-width="2.4"/><path d="M4 6.5H9M6.5 4V9"/></svg>
<!-- right scrollbar -->
<div class="a" style="left:1253px;top:128px;width:15px;height:665px;background:#f9f9f9;border-left:1px solid #e8e8e8"></div>
<div class="a" style="left:1257px;top:214px;width:8px;height:322px;background:#c1c1c1;border-radius:4px"></div>
</body></html>
